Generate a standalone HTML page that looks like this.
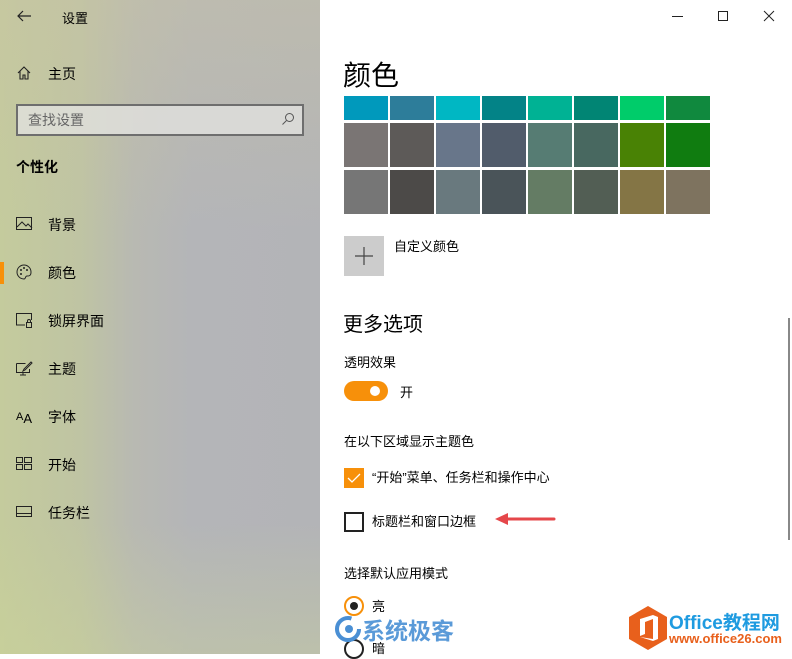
<!DOCTYPE html><html><head><meta charset="utf-8"><style>
*{margin:0;padding:0;box-sizing:border-box}
body{width:792px;height:654px;overflow:hidden;position:relative;font-family:"Liberation Sans","Noto Sans CJK SC",sans-serif;color:#000;background:#fff}
.l{position:absolute;left:0;top:0;width:320px;height:654px;background:linear-gradient(90deg,#c4cb9d 0%,#bfc4a3 25%,#b8b9b2 42%,#b4b5b8 60%,#b3b4b7 100%)}
.l:before{content:"";position:absolute;inset:0;background:linear-gradient(180deg,rgba(200,195,165,.45) 0%,rgba(0,0,0,0) 35%,rgba(0,0,0,0) 80%,rgba(205,215,150,.35) 100%)}
.a{position:absolute;white-space:nowrap;font-size:14px}
.sw{position:absolute;width:44px}
svg{position:absolute}
</style></head><body>
<div class="l"></div>
<svg style="left:16px;top:9px" width="16" height="14"><path d="M15 7H2M7 2L2 7l5 5" stroke="#222" fill="none" stroke-width="1.2"/></svg>
<div class="a" style="left:62px;top:8px;font-size:13px">设置</div>
<svg style="left:16px;top:65px" width="16" height="16"><path d="M2 8L8 2l6 6M4 6v8h3v-4h2v4h3V6" stroke="#222" fill="none" stroke-width="1.1"/></svg>
<div class="a" style="left:48px;top:64px">主页</div>
<div style="position:absolute;left:16px;top:104px;width:288px;height:32px;border:2px solid #6e6e6e;background:rgba(225,225,222,.8)"></div>
<div class="a" style="left:28px;top:110px;color:#666">查找设置</div>
<svg style="left:281px;top:112px" width="14" height="14"><circle cx="8.5" cy="5.5" r="4" stroke="#555" fill="none"/><path d="M5.5 8.5L1.5 12.5" stroke="#555"/></svg>
<div class="a" style="left:16px;top:157px;font-weight:bold">个性化</div>
<svg style="left:16px;top:217px" width="17" height="14"><rect x=".5" y=".5" width="15" height="12" stroke="#222" fill="none"/><path d="M1 10l5-5 4 4 2-2 4 4" stroke="#222" fill="none"/></svg>
<div class="a" style="left:48px;top:215px">背景</div>
<div style="position:absolute;left:0;top:262px;width:4px;height:22px;background:#f7900a"></div>
<svg style="left:16px;top:264px" width="17" height="17"><path d="M8 1a7 7 0 1 0 0 14c2 0 1-3 3-3s4 0 4-4A7 7 0 0 0 8 1z" stroke="#222" fill="none"/><circle cx="5" cy="6" r="1" fill="#222"/><circle cx="8" cy="4" r="1" fill="#222"/><circle cx="11" cy="6" r="1" fill="#222"/><circle cx="5" cy="10" r="1" fill="#222"/></svg>
<div class="a" style="left:48px;top:263px">颜色</div>
<svg style="left:16px;top:313px" width="17" height="15"><path d="M9 12H.5V.5h15V7" stroke="#222" fill="none"/><rect x="10.5" y="9.5" width="5" height="5" stroke="#222" fill="none"/><path d="M11.5 9.5V8a1.5 1.5 0 0 1 3 0v1.5" stroke="#222" fill="none"/></svg>
<div class="a" style="left:48px;top:311px">锁屏界面</div>
<svg style="left:16px;top:361px" width="17" height="15"><path d="M.5 2.5h9M.5 2.5v9h13V8M4 14h6M7 11.5v2.5" stroke="#222" fill="none"/><path d="M15 1l-7 7-1 2 2-1 7-7z" stroke="#222" fill="none"/></svg>
<div class="a" style="left:48px;top:359px">主题</div>
<div class="a" style="left:16px;top:408px;font-size:11px">A<span style="font-size:13px;position:relative;top:3px">A</span></div>
<div class="a" style="left:48px;top:407px">字体</div>
<svg style="left:16px;top:457px" width="17" height="13"><rect x=".5" y=".5" width="6" height="5" stroke="#222" fill="none"/><rect x="8.5" y=".5" width="7" height="5" stroke="#222" fill="none"/><rect x=".5" y="7.5" width="6" height="5" stroke="#222" fill="none"/><rect x="8.5" y="7.5" width="7" height="5" stroke="#222" fill="none"/></svg>
<div class="a" style="left:48px;top:455px">开始</div>
<svg style="left:16px;top:506px" width="17" height="12"><rect x=".5" y=".5" width="15" height="10" stroke="#222" fill="none"/><path d="M1 7.5h15" stroke="#222"/></svg>
<div class="a" style="left:48px;top:503px">任务栏</div>

<div style="position:absolute;left:672px;top:16px;width:11px;height:1px;background:#222"></div>
<div style="position:absolute;left:718px;top:11px;width:10px;height:10px;border:1px solid #222"></div>
<svg style="left:763px;top:10px" width="12" height="12"><path d="M1 1l10 10M11 1L1 11" stroke="#222"/></svg>

<div class="a" style="left:343px;top:54px;font-size:28px">颜色</div>
<div id="g"></div>
<div style="position:absolute;left:344px;top:236px;width:40px;height:40px;background:#ccc"></div>
<svg style="left:355px;top:247px" width="18" height="18"><path d="M9 0v18M0 9h18" stroke="#444" stroke-width="1.2"/></svg>
<div class="a" style="left:394px;top:236px;font-size:13px">自定义颜色</div>
<div class="a" style="left:343px;top:308px;font-size:20px">更多选项</div>
<div class="a" style="left:344px;top:352px;font-size:13px">透明效果</div>
<div style="position:absolute;left:344px;top:381px;width:44px;height:20px;border-radius:10px;background:#f7900a"></div>
<div style="position:absolute;left:370px;top:386px;width:10px;height:10px;border-radius:5px;background:#fff"></div>
<div class="a" style="left:400px;top:382px;font-size:13px">开</div>
<div class="a" style="left:344px;top:431px;font-size:13px">在以下区域显示主题色</div>
<div style="position:absolute;left:344px;top:468px;width:20px;height:20px;background:#f7900a"></div>
<svg style="left:344px;top:468px" width="20" height="20"><path d="M4 10l4 4 8-8" stroke="#fff" fill="none" stroke-width="1.3"/></svg>
<div class="a" style="left:372px;top:467px;font-size:13px">“开始”菜单、任务栏和操作中心</div>
<div style="position:absolute;left:344px;top:512px;width:20px;height:20px;border:2px solid #222"></div>
<div class="a" style="left:372px;top:511px;font-size:13px">标题栏和窗口边框</div>
<svg style="left:494px;top:512px" width="64" height="16"><path d="M60 7H12" stroke="#e5474a" stroke-width="3" stroke-linecap="round"/><path d="M1 7l13-6v12z" fill="#e5474a"/></svg>
<div style="position:absolute;left:788px;top:318px;width:2px;height:222px;background:#888"></div>
<div class="a" style="left:344px;top:563px;font-size:13px">选择默认应用模式</div>
<div style="position:absolute;left:344px;top:596px;width:20px;height:20px;border:2px solid #f7900a;border-radius:50%"></div>
<div style="position:absolute;left:350px;top:602px;width:8px;height:8px;border-radius:50%;background:#222"></div>
<div class="a" style="left:372px;top:596px;font-size:13px">亮</div>
<div style="position:absolute;left:344px;top:639px;width:20px;height:20px;border:2px solid #222;border-radius:50%"></div>
<div class="a" style="left:372px;top:638px;font-size:13px">暗</div>
<svg style="left:332px;top:614px" width="34" height="30"><circle cx="16" cy="15" r="11" stroke="#4a8fd4" stroke-width="4" fill="none" stroke-dasharray="55 14"/><circle cx="17" cy="15" r="4" fill="#4a8fd4"/></svg>
<div class="a" style="left:362px;top:612px;font-size:23px;font-weight:bold;color:#5a9ad8">系统极客</div>
<svg style="left:627px;top:605px" width="42" height="46"><path d="M21 1l19 11v22L21 45 2 34V12z" fill="#e8601c"/><path d="M13 14l13-4 5 2v22l-5 2-13-4 13 2V14l-8 3v12l-5 2z" fill="#fff"/></svg>
<div class="a" style="left:669px;top:608px;font-size:19px;font-weight:bold;color:#1f9be0">Office教程网</div>
<div class="a" style="left:669px;top:631px;font-size:13px;font-weight:bold;color:#e8601c">www.office26.com</div>
<script>
var c=[["#0099bc","#2d7d9a","#00b7c3","#038387","#00b294","#018574","#00cc6a","#10893e"],["#7a7574","#5d5a58","#68768a","#515c6b","#567c73","#486860","#498205","#107c10"],["#767676","#4c4a48","#69797e","#4a5459","#647c64","#525e54","#847545","#7e735f"]],t=[96,123,170],h=[24,44,44],s="";
for(var r=0;r<3;r++)for(var i=0;i<8;i++)s+='<div class="sw" style="left:'+(344+i*46)+'px;top:'+t[r]+'px;height:'+h[r]+'px;background:'+c[r][i]+'"></div>';
document.getElementById("g").innerHTML=s;
</script>
</body></html>
